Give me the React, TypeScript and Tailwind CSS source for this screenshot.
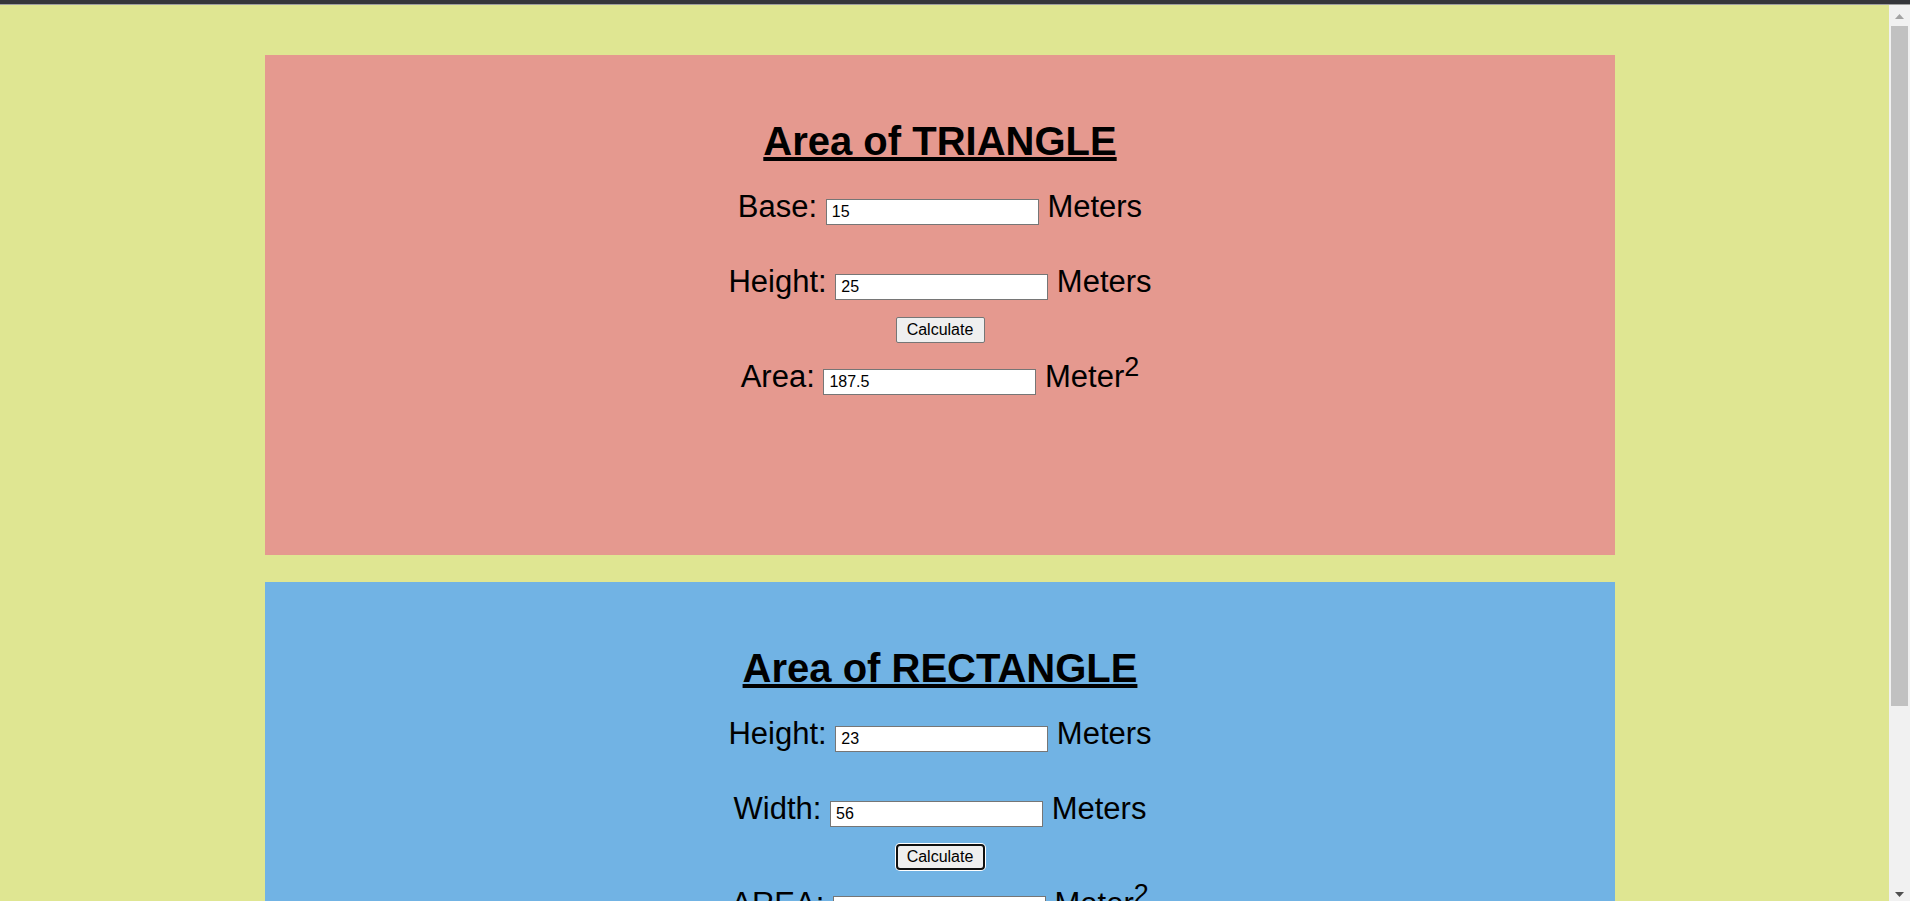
import React from 'react';

type Field = { label: string; value: string };

type Shape = {
  title: string;
  bg: string;
  fields: Field[];
  resultLabel: string;
  result: string;
  focused?: boolean;
};

const shapes: Shape[] = [
  {
    title: 'Area of TRIANGLE',
    bg: 'bg-[#e5998f]',
    fields: [
      { label: 'Base:', value: '15' },
      { label: 'Height:', value: '25' },
    ],
    resultLabel: 'Area:',
    result: '187.5',
  },
  {
    title: 'Area of RECTANGLE',
    bg: 'bg-[#71b3e4]',
    fields: [
      { label: 'Height:', value: '23' },
      { label: 'Width:', value: '56' },
    ],
    resultLabel: 'AREA:',
    result: '',
    focused: true,
  },
];

function NumberBox({ value }: { value: string }) {
  return (
    <input
      type="text"
      defaultValue={value}
      className="inline-block h-[26px] w-[213px] border border-[#767676] bg-white py-[1px] pl-[5px] pr-[2px] align-baseline text-[16px] leading-normal text-black outline-none"
    />
  );
}

function ShapeCard({ shape }: { shape: Shape }) {
  const [a, b] = shape.fields;
  return (
    <section className={`ml-[265px] mb-[27px] h-[500px] w-[1350px] pt-[63px] text-center text-black ${shape.bg}`}>
      <h1 className="text-[40px] font-bold leading-[46px] underline">{shape.title}</h1>

      {/* inputs */}
      <p className="mt-[25px] text-[31px] leading-[35px]">
        {a.label} <NumberBox value={a.value} /> Meters
      </p>
      <p className="mt-[39px] text-[31px] leading-[35px]">
        {b.label} <NumberBox value={b.value} /> Meters
      </p>

      <div className="mt-[17px] flex justify-center">
        <button
          type="button"
          className={
            shape.focused
              ? 'h-[26px] w-[89px] rounded-[4px] border-2 border-[#101010] bg-[#efefef] text-[16px] leading-none text-black shadow-[0_0_0_1px_#ffffff]'
              : 'h-[26px] w-[89px] rounded-[2px] border border-[#767676] bg-[#efefef] text-[16px] leading-none text-black'
          }
        >
          Calculate
        </button>
      </div>

      <p className="mt-[16px] text-[31px] leading-[35px]">
        {shape.resultLabel} <NumberBox value={shape.result} /> Meter
        <sup className="relative -top-[11px] align-baseline text-[27px] leading-none">2</sup>
      </p>
    </section>
  );
}

export default function App() {
  return (
    <div className="flex h-screen w-full flex-col overflow-hidden font-['Liberation_Sans',Arial,sans-serif]">
      <div className="h-[4px] bg-[#35363a]" />
      <div className="h-[1px] bg-[#9e9e9e]" />
      <div className="flex min-h-0 flex-1">
        <main className="min-w-0 flex-1 overflow-hidden bg-[#dfe692] pt-[50px]">
          {shapes.map((s) => (
            <ShapeCard key={s.title} shape={s} />
          ))}
        </main>

        {/* scrollbar */}
        <div className="flex w-[21px] flex-col items-center bg-[#f1f1f1]">
          <svg width="9" height="5" viewBox="0 0 9 5" className="mt-[9px]">
            <polygon points="4.5,0 9,5 0,5" fill="#a3a3a3" />
          </svg>
          <div className="mt-[7px] h-[680px] w-[17px] bg-[#c1c1c1]" />
          <div className="flex-1" />
          <svg width="9" height="5" viewBox="0 0 9 5" className="mb-[4px]">
            <polygon points="0,0 9,0 4.5,5" fill="#505050" />
          </svg>
        </div>
      </div>
    </div>
  );
}
